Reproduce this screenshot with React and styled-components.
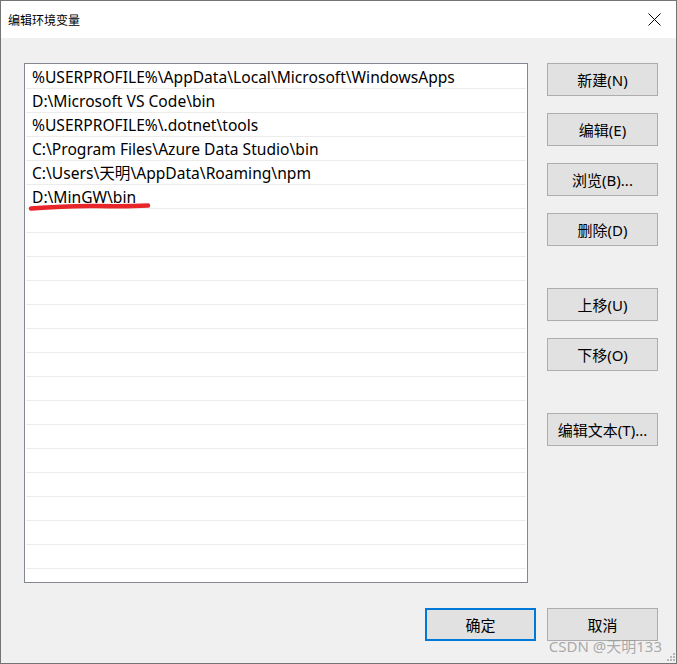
import React from 'react';
import styled, { createGlobalStyle } from 'styled-components';

const GlobalStyle = createGlobalStyle`
    html, body {
        margin: 0;
        padding: 0;
        background: #f0f0f0;
    }
    * {
        box-sizing: border-box;
    }
`;

const paths = [
    '%USERPROFILE%\\AppData\\Local\\Microsoft\\WindowsApps',
    'D:\\Microsoft VS Code\\bin',
    '%USERPROFILE%\\.dotnet\\tools',
    'C:\\Program Files\\Azure Data Studio\\bin',
    'C:\\Users\\天明\\AppData\\Roaming\\npm',
    'D:\\MinGW\\bin',
];

const TOTAL_ROWS = 22;

const sideButtons = [
    { label: '新建(N)' },
    { label: '编辑(E)' },
    { label: '浏览(B)...' },
    { label: '删除(D)' },
    { label: '上移(U)', space: 42 },
    { label: '下移(O)' },
    { label: '编辑文本(T)...', space: 42 },
];

function App() {
    const rows = Array.from({ length: TOTAL_ROWS }, (_, i) => paths[i] || '');

    return (
        <>
            <GlobalStyle />
            <Window>
                <TitleBar>
                    <Title>编辑环境变量</Title>
                    <CloseIcon width='13' height='13' viewBox='0 0 13 13'>
                        <path d='M0.5 0.5 L12.5 12.5 M12.5 0.5 L0.5 12.5' stroke='#000' strokeWidth='1' fill='none' />
                    </CloseIcon>
                </TitleBar>

                <Body>
                    <Main>
                        <PathList>
                            {rows.map((text, i) => (
                                <Row key={i}>
                                    {text}
                                    {text === 'D:\\MinGW\\bin' && (
                                        <Underline width='124' height='10' viewBox='0 0 124 10'>
                                            <path d='M3 6.5 Q 40 3.5 70 4 T 120 3.5' stroke='#e8262a' strokeWidth='4.5' strokeLinecap='round' fill='none' />
                                        </Underline>
                                    )}
                                </Row>
                            ))}
                        </PathList>

                        <SideColumn>
                            {sideButtons.map((b) => (
                                <Button key={b.label} $space={b.space}>{b.label}</Button>
                            ))}
                        </SideColumn>
                    </Main>

                    <Footer>
                        <Button $primary>确定</Button>
                        <Button>取消</Button>
                    </Footer>
                </Body>

                <Watermark>CSDN @天明133</Watermark>
                <Grip width='10' height='10' viewBox='0 0 10 10'>
                    {[[8, 0], [8, 3], [5, 3], [8, 6], [5, 6], [2, 6]].map(([x, y]) => (
                        <rect key={x + '-' + y} x={x} y={y + 1} width='2' height='2' fill='#b8b8b8' />
                    ))}
                </Grip>
            </Window>
        </>
    );
}

const Window = styled.div`
    position: relative;
    width: 677px;
    height: 664px;
    border: 1px solid #747474;
    background: #f0f0f0;
    display: flex;
    flex-direction: column;
    font-family: "Noto Sans", "Noto Sans CJK SC", sans-serif;
    color: #000;
`;

const TitleBar = styled.div`
    height: 37px;
    background: #fff;
    display: flex;
    align-items: center;
    justify-content: space-between;
    padding: 0 15px 0 7px;
`;

const Title = styled.div`
    font-family: "Noto Sans CJK SC", sans-serif;
    font-size: 12px;
    line-height: 1;
    padding-top: 1px;
`;

const CloseIcon = styled.svg`
    display: block;
`;

const Body = styled.div`
    flex: 1;
    display: flex;
    flex-direction: column;
    padding: 25px 18px 0 23px;
`;

const Main = styled.div`
    display: flex;
    gap: 19px;
`;

const PathList = styled.div`
    width: 504px;
    height: 520px;
    background: #fff;
    border: 1px solid #828790;
    padding: 1px;
    overflow: hidden;
`;

const Row = styled.div`
    position: relative;
    height: 24px;
    border-bottom: 1px solid #ececec;
    padding: 1px 6px 0;
    font-size: 15.6px;
    line-height: 22px;
    white-space: nowrap;
`;

const Underline = styled.svg`
    position: absolute;
    left: 2px;
    top: 17px;
`;

const SideColumn = styled.div`
    display: flex;
    flex-direction: column;
    gap: 17px;
`;

const Button = styled.button`
    width: 111px;
    height: 33px;
    margin-top: ${(p) => (p.$space ? p.$space - 17 + 'px' : '0')};
    background: #e1e1e1;
    border: ${(p) => (p.$primary ? '2px solid #0078d7' : '1px solid #adadad')};
    font-family: "Noto Sans", "Noto Sans CJK SC", sans-serif;
    font-size: 15px;
    color: #000;
    padding: 0;
    white-space: nowrap;
`;

const Footer = styled.div`
    display: flex;
    justify-content: flex-end;
    gap: 11px;
    margin-top: 25px;
`;

const Watermark = styled.div`
    position: absolute;
    right: 14px;
    bottom: 9px;
    font-family: "Noto Sans", "Noto Sans CJK SC", sans-serif;
    font-size: 15px;
    color: rgba(150, 150, 150, 0.8);
    line-height: 1;
`;

const Grip = styled.svg`
    position: absolute;
    right: 1px;
    bottom: 1px;
`;

export default App;
